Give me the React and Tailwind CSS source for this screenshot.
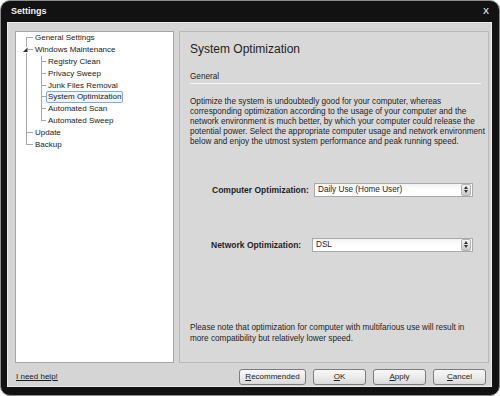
// App.jsx - Settings dialog, System Optimization page
const tree = [
  { label: 'General Settings', level: 0, first: true },
  { label: 'Windows Maintenance', level: 0, expanded: true },
  { label: 'Registry Clean', level: 1 },
  { label: 'Privacy Sweep', level: 1 },
  { label: 'Junk Files Removal', level: 1 },
  { label: 'System Optimization', level: 1, selected: true },
  { label: 'Automated Scan', level: 1 },
  { label: 'Automated Sweep', level: 1, last: true },
  { label: 'Update', level: 0 },
  { label: 'Backup', level: 0, last: true },
];

const paragraph = [
  'Optimize the system is undoubtedly good for your computer, whereas',
  'corresponding optimization according to the usage of your computer and the',
  'network environment is much better, by which your computer could release the',
  'potential power. Select the appropriate computer usage and network environment',
  'below and enjoy the utmost system performance and peak running speed.',
];

function Elbow({ first, last, width, children }) {
  return (
    <div className={`relative flex flex-col h-full ${width}`}>
      <div className={`h-1/2 border-b border-[#a8a8a8] ${first ? '' : 'border-l'}`} />
      <div className={`h-1/2 border-[#a8a8a8] ${last ? '' : 'border-l'}`} />
      {children}
    </div>
  );
}

function TreeRow({ item }) {
  const label = (
    <span
      className={`px-[1px] leading-[10px] border rounded-[2px] whitespace-nowrap ${
        item.selected ? 'border-[#84aadb] bg-[#edf4fd]' : 'border-transparent'
      }`}
    >
      {item.label}
    </span>
  );

  if (item.level === 1) {
    return (
      <div className="flex items-center h-[11.9px]">
        <div className="w-[15px] h-full border-l border-[#a8a8a8]" />
        <Elbow last={item.last} width="w-[5px]" />
        {label}
      </div>
    );
  }

  return (
    <div className="flex items-center h-[11.9px]">
      <Elbow first={item.first} last={item.last} width="w-[7px]">
        {item.expanded && (
          <svg className="absolute left-[-3px] top-[3px] bg-white" width="5" height="6" viewBox="0 0 5 6">
            <path d="M4.5 0.5 L4.5 5 L0 5 Z" fill="#2b2b2b" />
          </svg>
        )}
      </Elbow>
      {label}
    </div>
  );
}

function Spinner() {
  return (
    <div className="w-[10px] h-[12px] mr-[1px] rounded-[2px] border border-[#b4b4b4] bg-gradient-to-b from-[#f4f4f4] to-[#c8c8c8] flex flex-col items-center justify-center gap-[1px]">
      <svg width="4" height="3" viewBox="0 0 4 3">
        <path d="M2 0 L4 3 L0 3 Z" fill="#333" />
      </svg>
      <svg width="4" height="3" viewBox="0 0 4 3">
        <path d="M0 0 L4 0 L2 3 Z" fill="#333" />
      </svg>
    </div>
  );
}

function Select({ value, width }) {
  return (
    <div
      className={`h-[14px] ${width} flex items-center justify-between border border-[#a9a9a9] bg-gradient-to-b from-[#f2f2f2] via-white to-white`}
    >
      <span className="pl-[3px] text-[8.2px] leading-[10px] text-[#1e1e1e]">{value}</span>
      <Spinner />
    </div>
  );
}

function Button({ mnemonic, rest, width }) {
  return (
    <button
      className={`h-[16px] ${width} rounded-[3px] border border-[#7c7c7c] bg-gradient-to-b from-[#f7f7f7] via-[#ececec] to-[#d9d9d9] text-[8px] leading-[10px] text-[#222] flex items-center justify-center`}
    >
      <span className="underline">{mnemonic}</span>
      {rest}
    </button>
  );
}

export default function App() {
  return (
    <div className="w-[500px] h-[396px] bg-white font-['Liberation_Sans',Arial,sans-serif]">
      <div className="w-full h-full rounded-[10px] border border-[#8e8e8e] bg-[#121212] flex flex-col pl-[6px] pr-[7px] pb-[8px]">
        {/* Title bar */}
        <div className="h-[21px] flex items-center justify-between pl-[4px] pr-[3px] pt-[1px]">
          <span className="text-[9px] font-bold text-[#f2f2f2]">Settings</span>
          <span className="text-[9px] font-bold text-[#cfcfcf]">X</span>
        </div>

        {/* Body */}
        <div className="flex-1 flex flex-col bg-[#d5d5d5] border border-[#ececec] pl-[7px] pt-[8px] pr-[2px]">
          <div className="flex gap-[5px] h-[332px]">
            {/* Tree */}
            <div className="w-[159px] h-full bg-white border border-[#a6a6a6] pl-[10px] text-[8px] text-[#1a1a1a]">
              {tree.map((item) => (
                <TreeRow key={item.label} item={item} />
              ))}
            </div>

            {/* Page */}
            <div className="w-[310px] h-full bg-[#d8d8d8] border border-[#b9b9b9] pl-[10px] pr-[7px] pb-[18px] flex flex-col text-[#1e1e1e]">
              <div className="pt-[9px] text-[12px] leading-[16px] whitespace-nowrap">System Optimization</div>

              <div className="mt-[15px] pb-[1px] border-b border-[#f6f6f6] text-[8.2px] leading-[10px]">General</div>

              <div className="mt-[12.5px] text-[8.2px] leading-[10.2px]">
                {paragraph.map((line) => (
                  <div key={line} className="whitespace-nowrap">{line}</div>
                ))}
              </div>

              <div className="mt-[35.4px] flex items-center pl-[22px]">
                <span className="w-[102px] text-[8.5px] font-bold leading-[10px] whitespace-nowrap">Computer Optimization:</span>
                <Select value="Daily Use (Home User)" width="w-[159px]" />
              </div>

              <div className="mt-[41px] flex items-center pl-[21px]">
                <span className="w-[101px] text-[8.5px] font-bold leading-[10px] whitespace-nowrap">Network Optimization:</span>
                <Select value="DSL" width="w-[161px]" />
              </div>

              <div className="mt-auto text-[8.2px] leading-[10.5px]">
                <div className="whitespace-nowrap">Please note that optimization for computer with multifarious use will result in</div>
                <div className="whitespace-nowrap">more compatibility but relatively lower speed.</div>
              </div>
            </div>
          </div>

          {/* Footer */}
          <div className="flex-1 flex items-end justify-between pb-[1px] pr-[3px]">
            <span className="ml-[1px] mb-[3px] text-[8px] leading-[10px] underline text-[#1a1a1a]">I need help!</span>
            <div className="flex gap-[7px]">
              <Button mnemonic="R" rest="ecommended" width="w-[67px]" />
              <Button mnemonic="O" rest="K" width="w-[53px]" />
              <Button mnemonic="A" rest="pply" width="w-[53px]" />
              <Button mnemonic="C" rest="ancel" width="w-[53px]" />
            </div>
          </div>
        </div>
      </div>
    </div>
  );
}
